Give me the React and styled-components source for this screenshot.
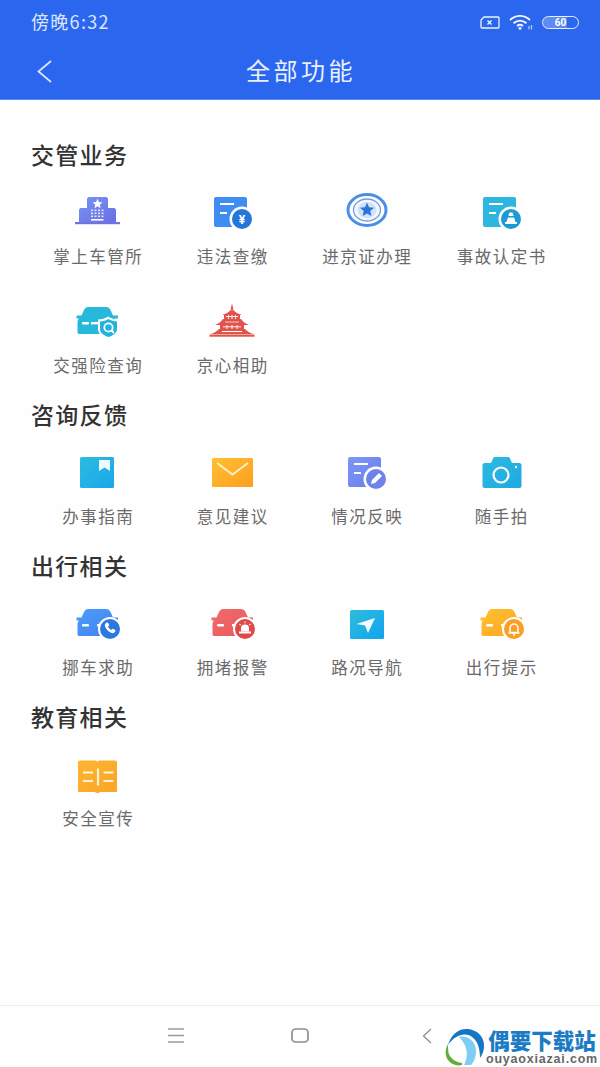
import React from 'react';
import styled, { createGlobalStyle } from 'styled-components';

const Global = createGlobalStyle`
  html, body { margin: 0; padding: 0; background: #fff; }
  body { font-family: "Noto Sans CJK SC", "Noto Sans", sans-serif; }
`;
const Page = styled.div`
  position: relative; width: 600px; height: 1067px; overflow: hidden;
  display: flex; flex-direction: column; background: #fefefe;
`;
const Header = styled.header`
  height: 100px; flex: none; background: #2b67ee; color: #fff;
  display: flex; flex-direction: column; box-shadow: inset 0 -1px 0 #5a8cf2;
`;
const StatusBar = styled.div`
  height: 42px; flex: none; box-sizing: border-box; padding: 0 21px 0 31px;
  display: flex; align-items: center; justify-content: space-between;
`;
const Clock = styled.span`
  font-size: 18px; line-height: 1; color: #dbe6fc; letter-spacing: 1.3px;
`;
const StatusIcons = styled.div`display: flex; align-items: center; gap: 9px; margin-top: 3px;`;
const Battery = styled.div`
  position: relative; width: 37px; height: 13px; box-sizing: border-box;
  border: 1.5px solid #e8effd; border-radius: 7px; display: flex; align-items: center; justify-content: center;
  font: 700 10px/1 "Roboto", sans-serif; color: #fff; background: linear-gradient(90deg, #5f8cf2 0 68%, transparent 68%);
`;
const TitleBar = styled.div`
  flex: 1; display: flex; align-items: center; justify-content: center; position: relative; padding-bottom: 3px;
`;
const Back = styled.svg`position: absolute; left: 35px; top: 17px;`;
const Title = styled.h1`
  margin: 0 -2px 0 0; font-size: 24px; font-weight: 400; letter-spacing: 3.500px; line-height: 32px; color: #eaf0fe;
`;
const Main = styled.main`flex: 1; box-sizing: border-box; padding: 39px 31px 0;`;
const Section = styled.section`margin-bottom: 21px;`;
const Heading = styled.h2`
  margin: -2px 0 21px; font-size: 23px; line-height: 34px; font-weight: 500; color: #333; letter-spacing: 1.300px;
`;
const Grid = styled.div`
  display: grid; grid-template-columns: repeat(4, 134.5px); row-gap: 32px;
`;
const Cell = styled.div`
  height: 77px; display: flex; flex-direction: column; align-items: center; gap: 12px;
`;
const Label = styled.span`
  font-size: 16.500px; line-height: 24px; color: #6a6a6a; letter-spacing: 1.500px; white-space: nowrap;
`;
const Bottom = styled.nav`
  height: 62px; flex: none; border-top: 1px solid #eeeeee; box-sizing: border-box;
  display: flex; justify-content: center; align-items: center; gap: 107px; padding-bottom: 2px; background: #fefefe;
`;
const NavBack = styled.svg`margin-left: 6px;`;
const Watermark = styled.div`
  position: absolute; left: 443px; top: 1027px; display: flex; gap: 2px; align-items: flex-start;
`;
const MarkText = styled.div`display: flex; flex-direction: column; align-items: center; width: 108px;`;
const MarkName = styled.span`
  font-size: 21.500px; line-height: 26px; font-weight: 900; color: #1b7cc4; white-space: nowrap;
`;
const MarkUrl = styled.span`
  font: 700 12.500px/13px "Liberation Sans", sans-serif; color: #666; letter-spacing: .8px; white-space: nowrap;
`;

const Defs = ({ id, a, b }) => (
  <defs><linearGradient id={id} x1="0" y1="0" x2="1" y2="1"><stop offset="0" stopColor={a} /><stop offset="1" stopColor={b} /></linearGradient></defs>
);
const Svg = ({ children }) => <svg width="50" height="40" viewBox="0 0 50 40">{children}</svg>;
const starPath = (cx, cy, r) => {
  let d = '';
  for (let i = 0; i < 10; i++) {
    const rad = i % 2 ? r * 0.45 : r;
    const t = -Math.PI / 2 + (i * Math.PI) / 5;
    d += `${i ? 'L' : 'M'}${(cx + rad * Math.cos(t)).toFixed(2)} ${(cy + rad * Math.sin(t)).toFixed(2)}`;
  }
  return d + 'Z';
};
const DocBase = ({ fill, cx = 34, cy = 27, r = 10, circle, children, x = 6, y = 5, w = 33, h = 30 }) => (
  <>
    <rect x={x} y={y} width={w} height={h} rx="2" fill={fill} />
    <rect x={x + 6} y={y + 6} width="14" height="2" fill="#fff" />
    <rect x={x + 6} y={y + 15} width="7" height="2" fill="#fff" />
    <circle cx={cx} cy={cy} r={r + 2.5} fill="#fff" />
    <circle cx={cx} cy={cy} r={r} fill={circle} />
    {children}
  </>
);
const carD = 'M15 6H33c2 0 3.500 1 4.500 3l2.500 5.500h5v3h-3.500c1 1 1.500 2 1.500 4V31c0 1-.5 2-1.500 2H6c-1 0-1.500-1-1.500-2V21.500c0-2 .5-3 1.500-4H3.500v-3H8.500l2.500-5.500c1-2 2.500-3 4-3z';
const Car = ({ fill, circle, children, cx = 37, cy = 26 }) => (
  <>
    <path d={carD} fill={fill} />
    <rect x="9" y="21" width="7" height="2.400" rx="1" fill="#fff" />
    <rect x="24" y="21" width="8" height="2.400" fill="#fff" />
    <circle cx={cx} cy={cy} r="12" fill="#fff" />
    <circle cx={cx} cy={cy} r="10" fill={circle} />
    {children}
  </>
);

const icons = {
  building: () => (
    <Svg>
      <Defs id="b1" a="#7695f7" b="#6a6ddf" />
      <path d="M16 5h17c1 0 2 1 2 2v9h6c1 0 2 1 2 2v12H6V18c0-1 1-2 2-2h6V7c0-1 1-2 2-2z" fill="url(#b1)" />
      <rect x="2" y="30" width="45" height="2.200" fill="#6b74e2" />
      <path d={starPath(24.500, 12, 5.200)} fill="#fff" />
      {[0, 1, 2].map(r => [0, 1, 2, 3].map(c => <rect key={`${r}${c}`} x={18 + c * 3.500} y={17.500 + r * 3} width="2" height="1.600" fill="#dfe3fb" />))}
      <rect x="18" y="27" width="12.500" height="1.600" fill="#fff" />
    </Svg>
  ),
  fine: () => (
    <Svg>
      <DocBase fill="#3f8df3" circle="#2476d9">
        <text x="34" y="31.500" textAnchor="middle" fontSize="12" fontWeight="700" fill="#fff" fontFamily="Roboto, sans-serif">¥</text>
      </DocBase>
    </Svg>
  ),
  badge: () => (
    <Svg>
      <ellipse cx="25" cy="18" rx="19" ry="15.500" fill="none" stroke="#4a8fe6" strokeWidth="3" />
      <ellipse cx="25" cy="18" rx="13.500" ry="11" fill="#f4f8fe" stroke="#6f9fe0" strokeWidth="1.300" />
      <ellipse cx="25" cy="18" rx="9.500" ry="8" fill="#cfe2fa" />
      <path d={starPath(25, 18, 7.500)} fill="#2b74da" />
    </Svg>
  ),
  accident: () => (
    <Svg>
      <DocBase fill="#2cb6e0" circle="#1c9ad4">
        <path d="M32.500 20.500h3l3 9.500h-9z" fill="#fff" />
        <rect x="28" y="30" width="12" height="2" fill="#fff" />
        <rect x="31" y="24" width="6" height="1.500" fill="#1c9ad4" />
      </DocBase>
    </Svg>
  ),
  insure: () => (
    <Svg>
      <path d={carD} fill="#27b9d9" />
      <rect x="9" y="21" width="7" height="2.400" rx="1" fill="#fff" />
      <rect x="18" y="21" width="8" height="2.400" fill="#fff" />
      <path d="M25 18.500c4 0 7-1 10-3 3 2 6 3 11 3V28c0 5-5 8-10.500 10C30 36 25 33 25 28z" fill="#fff" />
      <path d="M27 20.500c3.500 0 6-1 8.500-2.500 2.500 1.500 5 2.500 8.500 2.500V28c0 4-4 6.500-8.500 8C31 34.500 27 32 27 28z" fill="#22b3dc" />
      <circle cx="35.500" cy="26.500" r="4.200" fill="none" stroke="#fff" strokeWidth="1.800" />
      <path d="M38.500 29.500l2.500 2.500" stroke="#fff" strokeWidth="1.800" />
    </Svg>
  ),
  temple: () => (
    <Svg>
      <path d="M24 2.500l1.500 6h-3z" fill="#e0534b" />
      <path d="M24 8c3 3 6 5 10 6H14c4-1 7-3 10-6z" fill="#e0534b" />
      <rect x="16" y="14" width="16" height="4" fill="#e0534b" />
      <path d="M18 15.500h12M20.500 14v4M24 14v4M27.500 14v4" stroke="#fff" strokeWidth=".9" />
      <path d="M15 18h18c2 3 5 5 8 6H7c3-1 6-3 8-6z" fill="#e0534b" />
      <path d="M17 21h14" stroke="#f7c9c5" strokeWidth="1" />
      <rect x="12" y="24" width="24" height="4" fill="#e0534b" />
      <path d="M15 25.800h18M19 24v4M24 24v4M29 24v4" stroke="#fff" strokeWidth=".9" />
      <path d="M11 28h26c2 2 5 4 8 5H3c3-1 6-3 8-5z" fill="#e0534b" />
      <path d="M14 30.500h20" stroke="#fff" strokeWidth="1" />
      <rect x="1.500" y="33.500" width="45" height="2.200" fill="#e0534b" />
    </Svg>
  ),
  guide: () => (
    <Svg>
      <Defs id="g1" a="#2cbbe2" b="#1aa7ea" />
      <rect x="7" y="5" width="34" height="31" rx="1.500" fill="url(#g1)" />
      <path d="M26 8h11v11l-5.500-3.500L26 19z" fill="#fff" opacity=".92" />
    </Svg>
  ),
  mail: () => (
    <Svg>
      <Defs id="m1" a="#ffc033" b="#ff9d1e" />
      <rect x="4" y="6" width="41" height="29" rx="1.500" fill="url(#m1)" />
      <path d="M9 11l15.500 11.500L40 11" fill="none" stroke="#ffeec6" strokeWidth="2" />
    </Svg>
  ),
  report: () => (
    <Svg>
      <Defs id="r1" a="#7c97f6" b="#6a7de8" />
      <DocBase fill="url(#r1)" circle="#6d82ea">
        <path d="M29 32l1-4 7-7 3 3-7 7z" fill="#fff" />
      </DocBase>
    </Svg>
  ),
  camera: () => (
    <Svg>
      <Defs id="c1" a="#2bbbe2" b="#1fa9e0" />
      <path d="M7.500 11H14l2-4.500c.5-1 1-1.500 2-1.500h13c1 0 1.500.5 2 1.500l2 4.500h7.500c1 0 2 1 2 2V34c0 1-1 2-2 2H7.500c-1 0-2-1-2-2V13c0-1 1-2 2-2z" fill="url(#c1)" />
      <circle cx="24" cy="23" r="7.500" fill="none" stroke="#fff" strokeWidth="2.200" />
      <circle cx="39" cy="15" r="1.200" fill="#fff" />
    </Svg>
  ),
  phone: () => (
    <Svg>
      <Defs id="p1" a="#4d9cfb" b="#3f83ec" />
      <Car fill="url(#p1)" circle="#2c78dd">
        <path d="M33 20c1-.8 2-.6 2.500.5l.8 1.800-1.300 1.200c.5 1.500 1.700 2.800 3.200 3.500l1.300-1.300 2 .9c1 .5 1.200 1.500.5 2.500-1 1.200-2.500 1.400-4 .7-3-1.300-5-3.600-6-6.500-.4-1.300 0-2.400 1-3.300z" fill="#fff" />
      </Car>
    </Svg>
  ),
  alarm: () => (
    <Svg>
      <Defs id="a1" a="#f06b6e" b="#e85a5c" />
      <Car fill="url(#a1)" circle="#e0484a">
        <path d="M33 28.500v-3a4 4 0 0 1 8 0v3z" fill="#fff" />
        <rect x="31" y="28.500" width="12" height="2" fill="#fff" />
        <path d="M37 18.500v1.800M31.500 21l1.200 1.200M42.500 21l-1.200 1.200" stroke="#fff" strokeWidth="1.100" />
      </Car>
    </Svg>
  ),
  nav: () => (
    <Svg>
      <Defs id="n1" a="#2fbcdc" b="#10a4ef" />
      <rect x="8" y="7" width="34" height="29" rx="1.500" fill="url(#n1)" />
      <path d="M14.500 21L33 15l-7 15-3-7.500z" fill="#fff" opacity=".94" />
    </Svg>
  ),
  bell: () => (
    <Svg>
      <Defs id="e1" a="#ffc02f" b="#fca724" />
      <Car fill="url(#e1)" circle="#fb9f24">
        <path d="M33 29.500v-4.500a4 4 0 0 1 8 0v4.500z" fill="none" stroke="#fff" strokeWidth="1.500" />
        <path d="M31.500 30h11" stroke="#fff" strokeWidth="1.400" />
        <circle cx="37" cy="32" r="1" fill="#fff" />
      </Car>
    </Svg>
  ),
  book: () => (
    <Svg>
      <Defs id="k1" a="#fdb532" b="#fba426" />
      <path d="M5 10c0-1 .5-2 2-2h15c1 0 2 .5 2.500 1.500C25 8.500 26 8 27 8h15c1.500 0 2 1 2 2v28c0 1 0 1.500-1 1.500H28c-1 0-2 .5-3.500 1.500C23 40 22 39.500 21 39.500H6c-1 0-1-.5-1-1.500z" fill="url(#k1)" transform="translate(0 -1.500)" />
      <g stroke="#fff3d6" strokeWidth="2.200">
        <path d="M10 18.500h10M10 27h10M30.500 18.500h10M30.500 27h10" />
        <path d="M25 14.500v17" />
      </g>
    </Svg>
  ),
};

const sections = [
  { title: '交管业务', items: [['掌上车管所', 'building'], ['违法查缴', 'fine'], ['进京证办理', 'badge'], ['事故认定书', 'accident'], ['交强险查询', 'insure'], ['京心相助', 'temple']] },
  { title: '咨询反馈', items: [['办事指南', 'guide'], ['意见建议', 'mail'], ['情况反映', 'report'], ['随手拍', 'camera']] },
  { title: '出行相关', items: [['挪车求助', 'phone'], ['拥堵报警', 'alarm'], ['路况导航', 'nav'], ['出行提示', 'bell']] },
  { title: '教育相关', items: [['安全宣传', 'book']] },
];

export default function App() {
  return (
    <Page>
      <Global />
      <Header>
        <StatusBar>
          <Clock>傍晚6:32</Clock>
          <StatusIcons>
            <svg width="20" height="13" viewBox="0 0 20 13">
              <path d="M4 1h14c.6 0 1 .4 1 1v9c0 .6-.4 1-1 1H2c-.6 0-1-.4-1-1V4z" fill="none" stroke="#eef3fe" strokeWidth="1.300" />
              <path d="M7.500 4.500l4 4M11.500 4.500l-4 4" stroke="#eef3fe" strokeWidth="1.400" />
            </svg>
            <svg width="24" height="15" viewBox="0 0 24 15">
              <path d="M1 5c6-5.500 14-5.500 20 0M4.500 8.300c4-3.500 9-3.500 13 0M8 11c2-1.600 4-1.600 6 0" fill="none" stroke="#f2f6ff" strokeWidth="1.800" />
              <circle cx="11" cy="13.300" r="1.500" fill="#f2f6ff" />
              <path d="M20 11v3.500M22.500 10v4.500" stroke="#b7cdf9" strokeWidth="1.200" />
            </svg>
            <Battery>60</Battery>
          </StatusIcons>
        </StatusBar>
        <TitleBar>
          <Back width="18" height="25" viewBox="0 0 18 25"><path d="M16 2L3.500 12.500 16 23" fill="none" stroke="#dfe8fd" strokeWidth="1.700" /></Back>
          <Title>全部功能</Title>
        </TitleBar>
      </Header>
      <Main>
        {sections.map(s => (
          <Section key={s.title}>
            <Heading>{s.title}</Heading>
            <Grid>
              {s.items.map(([label, icon]) => {
                const Icon = icons[icon];
                return <Cell key={label}><Icon /><Label>{label}</Label></Cell>;
              })}
            </Grid>
          </Section>
        ))}
      </Main>
      <Bottom>
        <svg width="16" height="15" viewBox="0 0 16 15"><path d="M0 1h16M0 7.500h16M0 14h16" stroke="#9a9a9a" strokeWidth="1.500" /></svg>
        <svg width="18" height="15" viewBox="0 0 18 15"><rect x="1" y="1" width="16" height="13" rx="3.500" fill="none" stroke="#8e8e8e" strokeWidth="1.700" /></svg>
        <NavBack width="10" height="16" viewBox="0 0 10 16"><path d="M9 1L1.500 8 9 15" fill="none" stroke="#8e8e8e" strokeWidth="1.300" /></NavBack>
      </Bottom>
      <Watermark>
        <svg width="43" height="40" viewBox="0 0 43 40">
          <path d="M5 18C8 8 15 2 23 2c11 0 19 8 18 18 0 4-2 8-4 11 0-9-2-17-8-21C22 5 12 8 5 18z" fill="#1576c4" />
          <path d="M16 10c8-2 17 4 17 14 0 6-2 11-5 14h-7c4-8 5-18-5-28z" fill="#7fcdf5" />
          <path d="M5 17C1 24 2 32 8 36c3 2 7 3 11 2v-2c-7-1-12-5-13.500-10C5 23 5 20 5 17z" fill="#62ad3c" />
        </svg>
        <MarkText>
          <MarkName>偶要下载站</MarkName>
          <MarkUrl>ouyaoxiazai.com</MarkUrl>
        </MarkText>
      </Watermark>
    </Page>
  );
}
